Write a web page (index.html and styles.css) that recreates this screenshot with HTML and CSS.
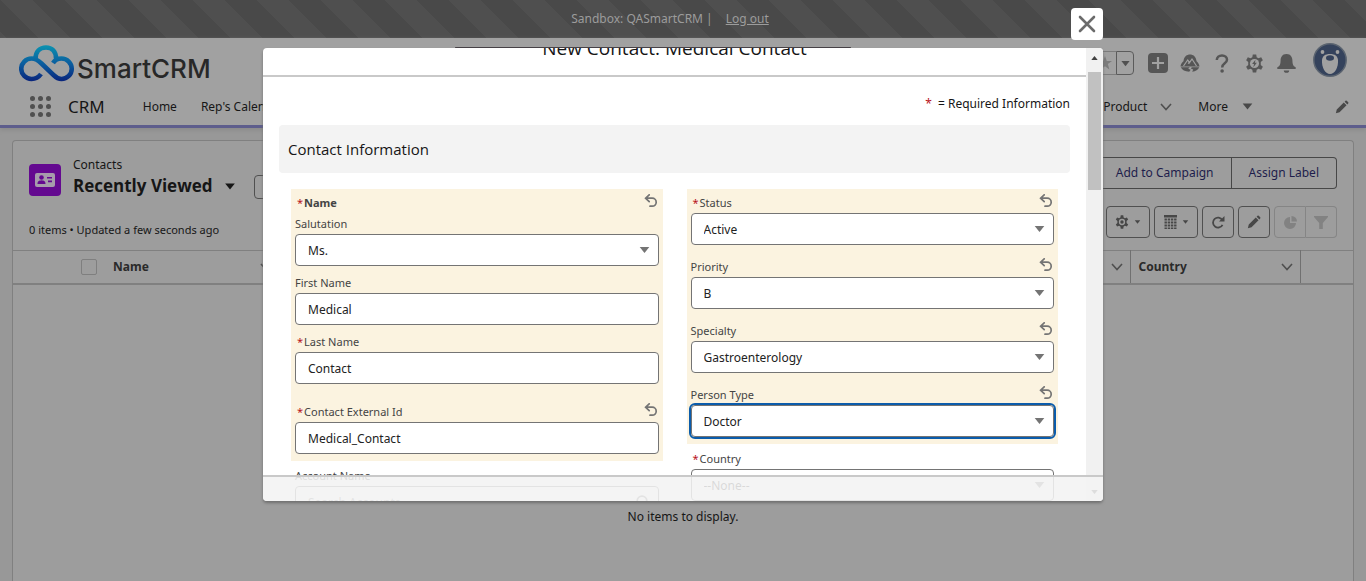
FILE: index.html
```html
<!DOCTYPE html>
<html lang="en">
<head>
<meta charset="utf-8">
<title>New Contact: Medical Contact</title>
<link rel="stylesheet" href="styles.css">
</head>
<body>
<svg class="defs" aria-hidden="true">
  <symbol id="i-down" viewBox="0 0 12 8"><path d="M.5 .5h11L6 7.500z" fill="currentColor"/></symbol>
  <symbol id="i-chev" viewBox="0 0 12 8"><path d="M1 1l5 5.500L11 1" fill="none" stroke="currentColor" stroke-width="1.600"/></symbol>
  <symbol id="i-undo" viewBox="0 0 14 14"><path d="M5.200 .8L1.600 4.200l3.600 3.400M2 4.200h6.200a4 4 0 0 1 0 8H6" fill="none" stroke="currentColor" stroke-width="1.700" stroke-linecap="round"/></symbol>
  <symbol id="i-pencil" viewBox="0 0 16 16"><path d="M1 15l1-4.200L10 2.800 13.200 6 5.200 14zM11 1.900l1-1q.7-.6 1.400 0L15.100 2.600q.6.7 0 1.400l-1 1z" fill="currentColor"/></symbol>
  <symbol id="i-gear" viewBox="0 0 20 20"><path d="M8.200 .5h3.600l.5 2.900 1.900 1.100 2.800-1 1.800 3.100L16.600 8.500v3l2.200 1.900-1.800 3.100-2.800-1-1.900 1.100-.5 2.900H8.200l-.5-2.900-1.900-1.100-2.800 1-1.800-3.100 2.200-1.900v-3L1.200 6.600 3 3.500l2.800 1 1.900-1.100z" fill="currentColor"/></symbol>
</svg>
<div class="page">
  <div class="banner"><span>Sandbox: QASmartCRM |</span><a href="#">Log out</a></div>
  <header class="header">
    <div class="brandbar">
      <div class="brand">
        <svg class="cloud" viewBox="0 0 56 38" aria-hidden="true">
          <defs><linearGradient id="g" gradientUnits="userSpaceOnUse" x1="0" y1="0" x2="0" y2="38"><stop offset="0" stop-color="#0b93b0"/><stop offset=".5" stop-color="#0b5c9e"/><stop offset="1" stop-color="#0a1f78"/></linearGradient></defs>
          <path d="M22 29c-2.500 3.500-5.500 5-9.500 5a10 10 0 0 1 0-20.500c4 0 7 2 10 5l12 11.500c3 3 5 4 8 4a10 10 0 0 0 0-20.500c-4 0-6.500 1.500-8.500 4.500M16.500 14c0-7.500 4.500-11.500 10.500-11.500s10 4 10 11" fill="none" stroke="url(#g)" stroke-width="4.600"/>
        </svg>
        <span class="brandname">SmartCRM</span>
      </div>
      <div class="globals">
        <span class="fav"><button class="star" aria-label="Favorite"><svg width="14" height="14" viewBox="0 0 14 14"><path d="M7 0l1.800 5H14L9.800 8l1.600 5.500L7 10.300 2.600 13.500 4.200 8 0 5h5.200z" fill="#7b7b7b"/></svg></button><button class="favlist" aria-label="Favorites list"><svg width="9" height="7"><use href="#i-down"/></svg></button></span>
        <button aria-label="Create"><svg width="20" height="20" viewBox="0 0 20 20"><rect width="20" height="20" rx="4" fill="#565656"/><path d="M10 4v12M4 10h12" stroke="#a1a1a1" stroke-width="2.200"/></svg></button>
        <button aria-label="Trailhead"><svg width="20" height="18" viewBox="0 0 20 18"><path d="M.5 12.500C1 9 3 8 3.500 7 4 2.500 7 .5 10 .5S16 2.500 16.500 7c.5 1 2.500 2 3 5.500z" fill="#565656"/><path d="M3.500 12l4.200-6 1.800 2.600L12 5l4.500 7M8 9.500l1.500-1" fill="none" stroke="#a1a1a1" stroke-width="1.200"/><path d="M.8 13.300h9l-1.600 1.500 2.500 1-1.500 2C5 17.500 2 16 .8 13.300zm11 0h7.400c-1 2.400-3.500 4-7 4.400l1-2.200-2.400-1z" fill="#565656"/></svg></button>
        <button aria-label="Help"><svg width="14" height="19" viewBox="0 0 14 19"><path d="M1.800 6C1.800 3.200 4 1.400 7 1.400s5 1.800 5 4.400c0 3.600-4.800 3.400-4.800 7.600" fill="none" stroke="#565656" stroke-width="2.500"/><circle cx="7.100" cy="17" r="1.800" fill="#565656"/></svg></button>
        <button aria-label="Setup"><svg class="mid" width="19" height="19" viewBox="0 0 20 20"><use href="#i-gear"/><circle cx="10" cy="10" r="4.800" fill="#a1a1a1"/><path d="M11 6l-3.500 4.500h2L8.800 14l3.700-4.800h-2z" fill="#565656"/></svg></button>
        <button aria-label="Notifications"><svg width="19" height="19" viewBox="0 0 19 19"><path d="M9.500 0C5 0 3.600 3.500 3.600 6.500c0 4-1 5.500-2.800 6.500-1 .6-.9 2 .2 2h17c1.100 0 1.200-1.400.2-2-1.800-1-2.800-2.500-2.800-6.500C15.400 3.500 14 0 9.500 0zM6.800 16.500h5.400a2.700 2.300 0 0 1-5.400 0z" fill="#565656"/></svg></button>
        <button class="avatar" aria-label="Profile"><svg width="34" height="34" viewBox="0 0 34 34"><circle cx="17" cy="17" r="16.200" fill="#34425c" stroke="#5b6470" stroke-width="1.500"/><circle cx="9.500" cy="9" r="1.900" fill="#a1a1a1"/><circle cx="24.500" cy="9" r="1.900" fill="#a1a1a1"/><path d="M17 11c5 0 7.500 2 8 6 .5 7-3 14-8 14s-8.500-7-8-14c.5-4 3-6 8-6z" fill="#a1a1a1"/><ellipse cx="17" cy="15" rx="4" ry="2.800" fill="#34425c"/></svg></button>
      </div>
    </div>
    <nav class="nav">
      <button class="waffle" aria-label="App launcher"><i></i><i></i><i></i><i></i><i></i><i></i><i></i><i></i><i></i></button>
      <span class="app">CRM</span>
      <a href="#">Home</a><a href="#">Rep's Calendar</a>
      <div class="navright"><a href="#">Product</a><svg class="chev" width="12" height="8"><use href="#i-chev"/></svg><a href="#" class="more">More</a><svg class="dark" width="11" height="7"><use href="#i-down"/></svg><button class="edit" aria-label="Edit navigation"><svg width="14" height="14"><use href="#i-pencil"/></svg></button></div>
    </nav>
  </header>
  <main class="list">
    <div class="listhead">
      <svg class="objicon" viewBox="0 0 32 32" aria-hidden="true"><rect width="32" height="32" rx="4" fill="#640990"/><rect x="6" y="9" width="20" height="14" rx="2" fill="#a69cab"/><circle cx="12.500" cy="13.500" r="2.300" fill="#640990"/><path d="M8.500 20c0-3 1.500-3.500 4-3.800 2.500.3 4 .8 4 3.800zM18 13h5v1.600h-5zm1 3.600h4v1.600h-4z" fill="#640990"/></svg>
      <div class="titles"><span>Contacts</span><h1>Recently Viewed <svg width="12" height="7"><use href="#i-down"/></svg></h1></div>
      <button class="pin" aria-label="Pin list">-</button>
      <div class="actions"><button>Add to Campaign</button><button>Assign Label</button></div>
    </div>
    <div class="listbar">
      <span class="small">0 items • Updated a few seconds ago</span>
      <div class="tools">
        <button class="wide" aria-label="List settings"><svg width="14" height="14" viewBox="0 0 20 20"><use href="#i-gear"/><circle cx="10" cy="10" r="4.500" fill="#9d9d9d"/><circle cx="10" cy="10" r="2.400" fill="currentColor"/></svg><svg width="7" height="4" viewBox="0 0 12 8"><use href="#i-down"/></svg></button>
        <button class="wide" aria-label="Display as table"><svg width="13" height="14" viewBox="0 0 13 14"><path d="M0 0h13v2.500H0z" fill="currentColor"/><path d="M1.700 3.500V14M4.900 3.500V14M8.100 3.500V14M11.300 3.500V14" stroke="currentColor" stroke-width="2.400" stroke-dasharray="2 1"/></svg><svg width="7" height="4" viewBox="0 0 12 8"><use href="#i-down"/></svg></button>
        <button aria-label="Refresh"><svg width="13" height="13" viewBox="0 0 13 13"><path d="M10.500 8.800A5 5 0 1 1 10.300 4" fill="none" stroke="currentColor" stroke-width="1.800"/><path d="M12.500 0v5.500H7z" fill="currentColor"/></svg></button>
        <button aria-label="Edit list"><svg width="14" height="14"><use href="#i-pencil"/></svg></button>
        <span class="pair"><button disabled aria-label="Charts"><svg width="13" height="13" viewBox="0 0 13 13"><path d="M6 1v6h6A6 6 0 1 1 6 1z" fill="currentColor"/><path d="M7.500 0A5.500 5.500 0 0 1 13 5.500H7.500z" fill="currentColor"/></svg></button><button disabled aria-label="Filters"><svg width="14" height="13" viewBox="0 0 14 13"><path d="M0 0h14v1L8.800 7v6H5.200V7L0 1z" fill="currentColor"/></svg></button></span>
      </div>
    </div>
    <table class="grid"><thead><tr>
      <th class="c-check"><input type="checkbox" aria-label="Select all"></th>
      <th class="c-name"><span class="thflex">Name<svg class="chev" width="12" height="8"><use href="#i-chev"/></svg></span></th>
      <th class="c-mid"><svg class="chev" width="12" height="8"><use href="#i-chev"/></svg></th>
      <th class="c-country"><span class="thflex">Country<svg class="chev" width="12" height="8"><use href="#i-chev"/></svg></span></th>
      <th class="c-end"></th>
    </tr></thead></table>
    <p class="empty">No items to display.</p>
  </main>
</div>

<div class="dialog" role="dialog" aria-label="New Contact: Medical Contact">
  <button class="close" aria-label="Close"><svg width="18" height="18" viewBox="0 0 18 18"><path d="M2 2l14 14M16 2L2 16" stroke="#6b6b6b" stroke-width="2.600" stroke-linecap="round"/></svg></button>
  <div class="toast"></div>
  <div class="modal">
    <div class="content">
      <div class="mtitle"><h2>New Contact: Medical Contact</h2></div>
      <p class="legend"><b class="req">*</b> = Required Information</p>
      <h3>Contact Information</h3>
      <form class="cols">
        <div class="col">
          <div class="edited">
            <fieldset>
              <div class="lab"><span class="strong"><b class="req">*</b>Name</span><button type="button" class="undo" aria-label="Undo Name"><svg width="14" height="14"><use href="#i-undo"/></svg></button></div>
              <div class="sub"><label for="sal">Salutation</label><span class="pick"><select id="sal"><option>Ms.</option></select><svg width="11" height="7"><use href="#i-down"/></svg></span></div>
              <div class="sub"><label for="fn">First Name</label><input id="fn" value="Medical"></div>
              <div class="sub"><label for="ln"><b class="req">*</b>Last Name</label><input id="ln" value="Contact"></div>
            </fieldset>
            <div class="field ext"><div class="lab"><label for="ext"><b class="req">*</b>Contact External Id</label><button type="button" class="undo" aria-label="Undo Contact External Id"><svg width="14" height="14"><use href="#i-undo"/></svg></button></div><input id="ext" value="Medical_Contact"></div>
          </div>
          <div class="field plain"><div class="lab"><label for="acc">Account Name</label></div><span class="pick"><input id="acc" placeholder="Search Accounts..."><svg width="14" height="14" viewBox="0 0 14 14"><circle cx="6" cy="6" r="4.800" fill="none" stroke="currentColor" stroke-width="1.800"/><path d="M9.500 9.500L13 13" stroke="currentColor" stroke-width="2"/></svg></span></div>
        </div>
        <div class="col">
          <div class="edited">
            <div class="field"><div class="lab"><label for="st"><b class="req">*</b>Status</label><button type="button" class="undo" aria-label="Undo Status"><svg width="14" height="14"><use href="#i-undo"/></svg></button></div><span class="pick"><select id="st"><option>Active</option></select><svg width="11" height="7"><use href="#i-down"/></svg></span></div>
            <div class="field"><div class="lab"><label for="pr">Priority</label><button type="button" class="undo" aria-label="Undo Priority"><svg width="14" height="14"><use href="#i-undo"/></svg></button></div><span class="pick"><select id="pr"><option>B</option></select><svg width="11" height="7"><use href="#i-down"/></svg></span></div>
            <div class="field"><div class="lab"><label for="sp">Specialty</label><button type="button" class="undo" aria-label="Undo Specialty"><svg width="14" height="14"><use href="#i-undo"/></svg></button></div><span class="pick"><select id="sp"><option>Gastroenterology</option></select><svg width="11" height="7"><use href="#i-down"/></svg></span></div>
            <div class="field"><div class="lab"><label for="pt">Person Type</label><button type="button" class="undo" aria-label="Undo Person Type"><svg width="14" height="14"><use href="#i-undo"/></svg></button></div><span class="pick"><select id="pt" class="active"><option>Doctor</option></select><svg width="11" height="7"><use href="#i-down"/></svg></span></div>
          </div>
          <div class="field plain"><div class="lab"><label for="co"><b class="req">*</b>Country</label></div><span class="pick"><select id="co"><option>--None--</option></select><svg width="11" height="7"><use href="#i-down"/></svg></span></div>
        </div>
      </form>
    </div>
    <div class="scroll" aria-hidden="true"><svg width="7" height="4" viewBox="0 0 8 5"><path d="M0 5l4-5 4 5z" fill="#404040"/></svg><div class="thumb"></div><svg class="sdown" width="7" height="4" viewBox="0 0 8 5"><path d="M0 0l4 5 4-5z" fill="#404040"/></svg></div>
    <div class="footer"></div>
  </div>
</div>
</body>
</html>
```
FILE: styles.css
```css
* { box-sizing: border-box; }
body { margin: 0; font: 12px/18px "Noto Sans", "Open Sans", sans-serif; color: #161616; background: #989898; overflow: hidden; }
button { font: inherit; color: inherit; background: none; border: 0; padding: 0; display: inline-flex; align-items: center; justify-content: center; }
a { color: inherit; text-decoration: none; }
h1, h2, h3, p, fieldset { margin: 0; padding: 0; border: 0; font-weight: 400; }
h1, h2, h3 { font-family: "Open Sans", "Noto Sans", sans-serif; }
.defs { position: absolute; width: 0; height: 0; }
.dark { color: #484848; }
.mid { color: #565656; }
.chev { color: #4f4f4f; }
.small { font-size: 11px; }
.page { height: 100vh; display: flex; flex-direction: column; }

.banner { height: 38px; flex: none; display: flex; align-items: center; justify-content: center; gap: 13px; padding-right: 26px; color: #9c9c9c; background: linear-gradient(45deg, #4f4f4f 25%, #494949 25% 50%, #4f4f4f 50% 75%, #494949 75%) 0 0 / 64px 64px; }
.banner a { text-decoration: underline; }

.header { flex: none; background: #a1a1a1; border-bottom: 3px solid #5d5d8c; box-shadow: 0 2px 4px #8a8a8a; }
.brandbar { height: 50px; display: flex; justify-content: space-between; padding: 0 18px 0 19px; }
.brand { display: flex; gap: 2px; padding-top: 7px; }
.cloud { width: 56px; height: 38px; }
.brandname { font: 500 26px/48px Inter, sans-serif; color: #282828; }
.globals { display: flex; align-items: center; gap: 12px; }
.globals > button { width: 20px; height: 34px; }
.globals > button.avatar { width: 36px; margin-left: 4px; padding-bottom: 6px; }
.fav { display: flex; margin-right: 2px; }
.fav button { height: 24px; border: 1px solid #7c7c7c; }
.fav .star { width: 24px; border-radius: 4px 0 0 4px; border-right: 0; }
.fav .favlist { width: 18px; border-color: #5b5b5b; border-radius: 0 4px 4px 0; color: #505050; }

.nav { height: 37px; display: flex; align-items: center; padding: 0 17px 0 30px; }
.waffle { display: grid; grid-template-columns: repeat(3, 5px); gap: 3px; }
.waffle i { width: 5px; height: 5px; border-radius: 50%; background: #505050; }
.app { font-size: 17px; margin: 0 38px 0 17px; }
.nav > a { margin-right: 24px; }
.navright { margin-left: auto; display: flex; align-items: center; }
.navright .chev { margin: 0 26px 0 13px; }
.more { margin-right: 14px; }
.edit { margin-left: 82px; color: #484848; }

.list { flex: 1; margin: 12px 12px 0; border: 1px solid #808080; border-bottom: 0; border-radius: 4px 4px 0 0; background: #9d9d9d; }
.listhead { display: flex; align-items: flex-start; height: 65px; padding: 16px 16px 0; }
.objicon { width: 32px; height: 32px; margin: 7px 12px 0 0; }
.titles span { display: block; line-height: 16px; }
.titles h1 { font-size: 17px; line-height: 26px; font-weight: 700; }
.titles h1 svg { margin: 0 0 2px 7px; }
.pin { width: 24px; height: 24px; margin: 18px 0 0 18px; border: 1px solid #505050; border-radius: 4px; }
.actions { margin-left: auto; display: flex; }
.actions button { height: 32px; padding: 0 17px; border: 1px solid #474747; color: #1d1d4c; }
.actions button + button { border-left: 0; border-radius: 0 4px 4px 0; }
.listbar { display: flex; align-items: flex-start; justify-content: space-between; height: 44px; padding: 0 16px; }
.listbar > span { padding-top: 15px; }
.tools { display: flex; gap: 4px; color: #474747; }
.tools button { width: 32px; height: 32px; gap: 5px; border: 1px solid #505050; border-radius: 4px; }
.tools .wide { width: 44px; }
.pair { display: flex; }
.tools .pair button { border-color: #858585; color: #828282; border-radius: 4px 0 0 4px; }
.tools .pair button + button { width: 31px; border-left: 0; border-radius: 0 4px 4px 0; }
.grid { width: 100%; table-layout: fixed; border-collapse: collapse; }
.grid th { height: 33px; padding: 0 7px; text-align: left; color: #2a2a2a; border-top: 1px solid #808080; border-bottom: 2px solid #808080; }
.grid .c-check { width: 92px; padding-right: 8px; text-align: right; }
.grid .c-check input { appearance: none; display: block; width: 16px; height: 16px; margin: 0 0 0 auto; border: 1px solid #7f7f7f; border-radius: 2px; }
.grid .c-mid { text-align: right; border-right: 1px solid #707070; }
.grid .c-name { width: 174px; padding-left: 8px; }
.grid .c-country { width: 170px; padding-left: 8px; border-right: 1px solid #707070; }
.grid .c-end { width: 53px; }
.thflex { display: flex; align-items: center; justify-content: space-between; }
.empty { text-align: center; padding-top: 223px; }

.dialog { position: absolute; top: 8px; left: 50%; width: 840px; transform: translateX(-50%); display: flex; flex-direction: column; align-items: flex-end; }
.close { width: 32px; height: 32px; border-radius: 4px; background: #fff; }
.toast { align-self: center; width: 396px; height: 1px; margin: 7px 60px 0 0; border-radius: 4px; background: #454045; }
.modal { position: relative; width: 100%; height: calc(100vh - 128px); display: flex; border-radius: 4px; overflow: hidden; background: #fff; box-shadow: 0 2px 3px #6f6f6f; }
.content { flex: 1; min-width: 0; overflow: hidden; }
.mtitle { height: 29px; display: flex; align-items: flex-end; justify-content: center; padding-bottom: 13px; border-bottom: 2px solid #c9c9c9; }
.mtitle h2 { font-size: 19px; line-height: 28px; }
.legend { text-align: right; padding: 18px 16px 0; }
.legend .req { margin-right: 3px; }
.req { color: #b8121b; font-weight: 400; margin: 0 1px 0 2px; }
.content h3 { margin: 12px 16px 16px; padding: 0 9px; background: #f3f3f3; border-radius: 4px; font-size: 15px; line-height: 48px; }
.cols { display: grid; grid-template-columns: 1fr 1fr; gap: 24px; padding: 0 28px; color: #444; }
.cols label { font-size: 11px; }
.edited { background: #fbf3e0; padding: 4px 4px 7px; }
.lab { display: flex; justify-content: space-between; align-items: flex-start; height: 20px; line-height: 20px; }
.strong { font-weight: 700; font-size: 11px; }
.undo { color: #747474; width: 16px; height: 16px; }
.sub label { display: block; height: 21px; line-height: 22px; }
.sub { margin-bottom: 6px; }
.field { margin-bottom: 12px; }
.edited .field:last-child { margin-bottom: 0; }
.ext { margin-top: 12px; }
.pick { position: relative; display: block; color: #747474; }
.pick svg { position: absolute; right: 9px; top: 50%; transform: translateY(-50%); }
input:not([type]), select { appearance: none; display: block; width: 100%; height: 32px; padding: 0 12px; border: 1px solid #747474; border-radius: 4px; background: #fff; color: #222; font: inherit; }
select { padding-top: 1px; }
select.active { outline: 2px solid #0b5cab; outline-offset: 0; }
.plain { padding: 5px 4px 0; }
.scroll { width: 17px; background: #f1f1f1; display: flex; flex-direction: column; align-items: center; padding: 8px 0 7px; }
.thumb { width: 13px; height: 118px; margin-top: 12px; background: #c1c1c1; }
.sdown { margin-top: auto; }
.footer { position: absolute; left: 0; right: 0; bottom: 0; height: 26px; background: rgba(243, 243, 243, .88); border-top: 2px solid #c9c9c9; }
```
